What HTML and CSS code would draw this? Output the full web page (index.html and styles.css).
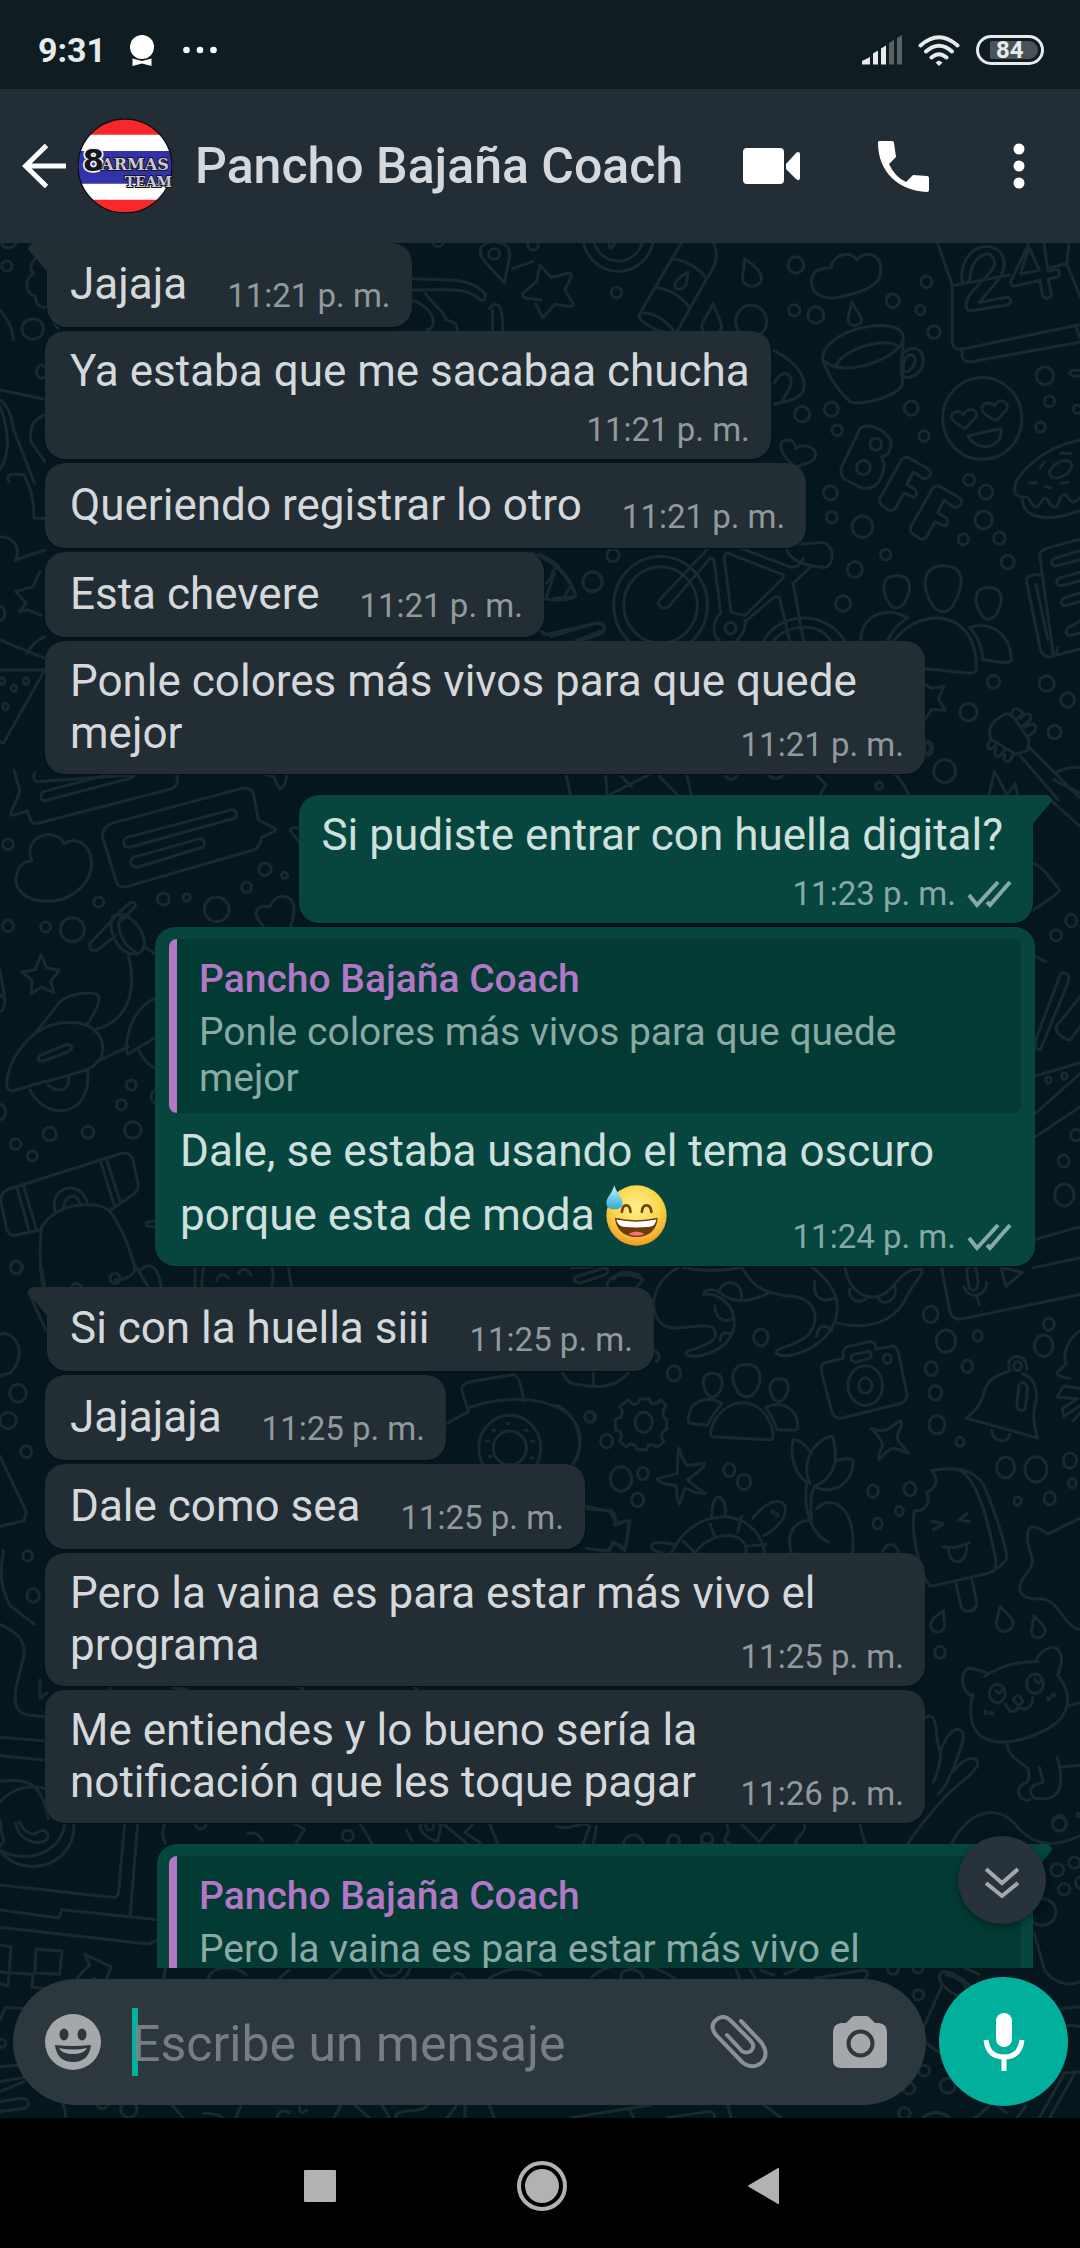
FILE: index.html
```html
<!DOCTYPE html>
<html lang="es">
<head>
<meta charset="utf-8">
<meta name="viewport" content="width=device-width, initial-scale=1">
<title>Pancho Bajaña Coach</title>
<link rel="stylesheet" href="styles.css">
</head>
<body>
<div class="app">
  <div class="status">
    <span class="clock">9:31</span>
    <svg class="notif" viewBox="0 0 24 31"><circle cx="12" cy="12" r="12" fill="#fff"/><path d="M2.500 23.500 12 26l9.500-2.500v7.500L12 28.500 2.500 31z" fill="#fff"/></svg>
    <svg class="more" viewBox="0 0 34 8" fill="#fff"><circle cx="3.500" cy="4" r="3.300"/><circle cx="17" cy="4" r="3.300"/><circle cx="30.500" cy="4" r="3.300"/></svg>
    <div class="system">
      <svg class="signal" viewBox="0 0 40 30"><g fill="#e8ebec"><path d="M0 29.500v-3.500l8-4v7.500zM11 18.500l5-3v14h-5zM19 13.500l5-3v19h-5z"/></g><g fill="#596165"><path d="M27 8l5-3v24.500h-5zM35 3l5-3v29.500h-5z"/></g></svg>
      <svg class="wifi" viewBox="0 0 42 31" fill="none" stroke="#e8ebec" stroke-width="4" stroke-linecap="round"><path d="M2.500 10.500Q21-6 39.500 10.500M8 16.500q13-11.500 26 0M13.500 22.500q7.500-6.500 15 0"/><path d="M21 25.500l3.500 2L21 31l-3.500-3.500z" fill="#e8ebec" stroke="none"/></svg>
      <span class="battery"><span class="level">84</span></span>
    </div>
  </div>

  <header class="bar">
    <button class="icon-btn" aria-label="Atrás"><svg width="44" height="44" viewBox="0 0 44 44" fill="none" stroke="#fff" stroke-width="5"><path d="M44 22H4M24.500 1.500 3.500 22l21 20.500"/></svg></button>
    <svg class="avatar" viewBox="51 53 288 288">
      <clipPath id="round"><circle cx="195" cy="197" r="142"/></clipPath>
      <g clip-path="url(#round)">
        <path fill="#fff" d="M50 50h290v290H50z"/>
        <path fill="#f8282a" d="M50 50h290v53H50zM50 298h290v45H50z"/>
        <path fill="#3232ab" d="M50 152h290v98H50z"/>
      </g>
      <circle cx="195" cy="197" r="141" fill="none" stroke="#0a0a0c" stroke-width="4"/>
      <g class="crest"><text x="68" y="213" class="crest-big">8</text><text x="124" y="210" class="crest-mid">ARMAS</text><text x="194" y="261" class="crest-low">TEAM</text></g>
    </svg>
    <h1>Pancho Bajaña Coach</h1>
    <button class="icon-btn" aria-label="Videollamada"><svg width="58" height="52" viewBox="0 0 58 52" fill="#fff"><rect y="8" width="41" height="36" rx="4"/><path d="M43 24 53 13q4-3 4 2v22q0 5-4 2L43 29z"/></svg></button>
    <button class="icon-btn" aria-label="Llamar"><svg width="58" height="52" viewBox="0 0 58 52" fill="#fff"><path d="M4 1h13q2 0 2 2l2 14-7 7q6 13 17 18l7-7 14 1q2 0 2 2v12q0 2-2 2C24 51 3 32 3 3q0-2 1-2z"/></svg></button>
    <button class="icon-btn" aria-label="Más opciones"><svg width="24" height="46" viewBox="0 0 24 46" fill="#fff"><circle cx="12" cy="6" r="5.500"/><circle cx="12" cy="23" r="5.500"/><circle cx="12" cy="40" r="5.500"/></svg></button>
  </header>

  <main class="chat">
    <svg class="doodles" viewBox="0 243 1080 1875" preserveAspectRatio="xMidYMin slice" aria-hidden="true">
      <!-- upper right: calendar, cup, letters, bicycle, people, brush -->
      <g transform="translate(540 240) scale(.3444 .3571)">
        <circle cx="227" cy="-15" r="103"/><circle cx="227" cy="-15" r="74"/><path d="M222 0q-20 40-22 10l5-15"/>
        <path d="M0 70l32 35 50-12q15 0 8 12l-18 35 24 38q2 10-14 8l-38-6L8 218l-20-40M-20 60l-60 20"/>
        <path d="M410 8 290 205q-5 10 2 16 40 40 103 40L484 108M500 0q30 50-16 108-40-48-96-54M342 134q60 10 92 56M296 204q50 0 92 50M430 90c-40 20-50 48-25 48 25-5 20-20 25-48z"/>
        <path d="M593 52c40 25 50 40 50 55 0 30-55 30-55 0 0-15 5-20 5-55zM503 178c-20 40-33 50-33 65 0 30 57 30 57 0 0-15-12-30-24-65z"/>
        <circle cx="743" cy="70" r="23"/><circle cx="222" cy="147" r="15"/><circle cx="738" cy="197" r="16"/><circle cx="801" cy="210" r="23"/><circle cx="613" cy="228" r="45"/>
        <path d="M845 78c5-40 60-50 75-22 30-30 70-15 70 28 0 50-60 62-120 76-50 8-80-8-82-42 0-25 15-40 57-40zM905 173c15 30 28 38 28 50 0 22-38 22-38 0 0-15 5-20 10-50z"/>
        <circle cx="1024" cy="170" r="19"/><circle cx="1122" cy="117" r="16"/><circle cx="1104" cy="196" r="13"/><circle cx="1144" cy="258" r="18"/>
        <path d="M1155 10l42 115v160q2 25 30 20l341-68M1197 128l165-30M1480 78l50-12 6-60M1530 68l38 90M1226 308v20q5 15 25 13l317-55M1555 240l13 35"/>
        <path d="M1225 110c-5-90 85-115 115-70 30 50-30 90-65 135l80-15c15 0 15 20 0 22l-105 17c-15 0-15-20-10-30 15-40 80-75 80-105-5-45-65-25-70 35-2 25-25 28-25 11zM1420 8l-54 110c0 10 5 12 15 10l70-15 8 40c5 15 25 13 25-2l-8-42 25-5c10-5 10-20 0-22l-26 5-12-80M1420 20l-25 75 55-10z"/>
        <path d="M820 335c0-90 235-130 235-60l-3 45v85c-15 35-140 65-155 45-40-40-60-70-77-115zM820 335c60 60 235-10 235-60M855 355c40-60 150-80 180-60M1055 315c50-35 75 20 45 55-15 15-40 20-50 8 0-30-5-50 5-63zM1055 360c0-60 50-40 30-10-10 20-30 25-30 10z"/>
        <path d="M680 310c80 40 100 90 80 120-20 20-40 20-80 30M680 400c30-50 60-20 45 15l-25 40"/>
        <circle cx="761" cy="488" r="22"/><circle cx="846" cy="474" r="20"/><circle cx="863" cy="533" r="15"/><circle cx="1078" cy="471" r="20"/><circle cx="1115" cy="549" r="15"/>
        <path d="M742 635c-40-25-60-75-25-75 20 0 25 15 25 25 10-15 60-10 58 15-2 25-30 25-58 35z"/>
        <circle cx="843" cy="708" r="20"/><circle cx="847" cy="776" r="16"/><circle cx="936" cy="803" r="30"/><circle cx="1004" cy="881" r="15"/><circle cx="914" cy="923" r="22"/><circle cx="880" cy="1018" r="22"/>
        <circle cx="1284" cy="500" r="115"/>
        <path d="M1235 528c-40-20-55-35-25-48 10 0 18 5 18 10 10-20 45-20 38 5zM1325 505c-40-15-55-35-30-48 15-3 20 2 25 8 10-25 45-15 35 10zM1243 548l95-20c10 55-70 70-95 20z"/>
        <path d="M930 527q20-15 60 5 40 25 25 55-5 20-25 20 15 20 5 45-15 50-60 43l-50-25q-15-12-10-33zM1050 615q10-10 20-5l55 30q15 10 5 22-8 10-20 5l-25-18-20 35 25 15q10 15-5 22l-28-12-25 42q-8 10-20 5l-22-15q-8-8-2-20zM1140 695q10-10 20-5l55 30q15 10 5 22-8 10-20 5l-27-18-18 35 25 15q10 15-5 22l-28-12-25 42q-8 10-20 5l-22-15q-8-8-2-20z"/>
        <circle cx="975" cy="572" r="17"/><circle cx="939" cy="637" r="20"/>
        <circle cx="1466" cy="380" r="25"/><circle cx="1479" cy="452" r="15"/><circle cx="1453" cy="524" r="14"/><circle cx="1560" cy="474" r="12"/><circle cx="1246" cy="672" r="16"/><circle cx="1295" cy="706" r="20"/><circle cx="1288" cy="784" r="25"/><circle cx="1334" cy="835" r="17"/><circle cx="1229" cy="838" r="15"/><circle cx="1358" cy="902" r="19"/>
        <path d="M1568 560c-110 20-190 100-190 135 0 20 15 25 25 25 20-5 20 20 35 28 15 0 20-28 30-25s10 25 30 25c15-15 5-30 25-35 15 0 10 25 30 20l15-10M1400 722c0 60 80 70 168 35M1512 597h28M1420 680h22M1466 690l18 5M1512 682l22-4M1452 638l12-16"/><ellipse cx="1512" cy="642" rx="35" ry="20" transform="rotate(-30 1512 642)"/><path d="M1568 365c-40-5-40 20 0 15"/>
        <circle cx="350" cy="1022" r="136"/><circle cx="350" cy="1022" r="107"/>
        <path d="M490 862 345 1010c-5 15 15 28 30 15l120-135 10 5 20 150c-20 15-30 60-5 75M545 877l160 60q5 10-5 15l-105 100-40-10-20-150q0-15 10-15M580 862l150 55 20-5 15-20M715 862c10 40 60 50 110 55 30 0 35-70-10-70l-70 5M790 912l-55 50 30 160M600 1065l80-65 15 0 30 122"/>
        <circle cx="553" cy="1087" r="16"/><path d="M595 1065c5 20-10 45-25 58M650 1120c50-80 180-85 235 3M680 1120c40-45 130-50 165 3"/>
        <circle cx="153" cy="957" r="28"/><circle cx="212" cy="883" r="18"/><path d="M0 880c50 20 90 70 104 115-10 15-60 15-90 10M48 910c-15 20-10 40-30 50M70 1000l15-25M0 1095l35 15 130-38c20-3 30 15 15 30l-80 25"/>
        <path d="M1034 940c50 0 45 40 25 75-10 15-30 20-40 10-30-40-30-85 15-85zM1170 912c70 0 60 60 30 110-15 25-45 25-60 0-35-50-30-110 30-110zM1300 973c50 0 45 40 25 75-10 15-30 20-40 5-30-40-25-80 15-80zM932 1120c0-60 60-100 136-62M1010 1120q20-40 58-62M1025 1125c80-105 245-90 242 75-5 18-20 12-35 12l-115-12M1248 1085c60-20 120 20 120 90-5 12-15 8-25 8l-58-8q0-50-37-90z"/>
        <path d="M1568 838l-95 25q-22 5-22 22l40 280 77-20M1455 937c-40 0-45 10-42 20l40 190c15 35 50 20 50-5M1440 965l35 155M1568 870l-75 22c-15 10-5 25 10 20l65-17M1568 930l-60 17c-15 10-5 25 10 20l50-13M1568 988l-47 15c-15 10-5 25 10 20l37-10M1568 1068l-35 18c-10 10-5 25 10 20l25-5"/>
        <circle cx="1317" cy="1237" r="18"/><circle cx="1471" cy="1242" r="22"/><circle cx="1532" cy="1288" r="20"/><circle cx="1244" cy="1322" r="25"/><circle cx="1494" cy="1378" r="19"/><circle cx="1175" cy="1487" r="32"/><circle cx="1112" cy="1422" r="22"/>
        <path d="M1117 1245l20 10 35-5-15 35 20 32-40-3-20 30M1350 1328q-60 30-40 70l70 42 35-10 5-30-35-50q-15-25-35-22zM1370 1325c5-25 30-5 32-2l-20 20M1395 1340c20-25 35-10 28 5l-20 15M1410 1365c20-20 35-5 28 10l-20 15M1310 1400c-20 20-5 30 5 22l12-15M1325 1422c-10 25 5 30 15 18l10-15M1350 1440c-10 25 15 25 20 10l5-15M1395 1445l110 123M1420 1420l145 140M1500 1490q30-15 68-12M1300 1568l20-80 35 65 25-30 10 45"/>
        <path d="M75 1495l15 65M190 1495l5 60M235 1500l30 30M320 1495l-120 60M345 1500l60 60M425 1495l15 60M800 1495l30 30-20 35M1030 1495q40 40 40 70"/><circle cx="985" cy="1528" r="10"/><circle cx="555" cy="1490" r="20"/><circle cx="685" cy="1480" r="28"/>
      </g>
      <!-- left edge: speech bubbles, cloud, scooter, camera -->
      <g transform="translate(0 770) scale(.3333)">
        <path d="M42 0l18 65-28 65q0 8 8 5l42-12 10 28q8 12 25 8l400-103q20-10 15-30l-8-26M105 8q-10 20 5 27l285-20q15-5 12-15M130 65l220-58M130 65q-15 15 0 28l260-68q15-5 15-20"/>
        <path d="M335 160l390-105q25-5 35 15l15 80 50 25q5 6-2 10l-38 17q-5 32-25 38l-380 110q-20 5-30-12l-42-135q-5-28 27-43zM380 203l315-84q20 2 12 25l-315 87c-25 5-25-23-12-28zM400 262l200-56q20 2 10 25l-195 60c-25 5-28-23-15-29z"/>
        <path d="M95 272c-30-75 75-105 98-50 40-30 90 10 80 75-10 55-70 100-140 97-60-3-95-40-83-80 5-25 20-40 45-42z"/>
        <circle cx="24" cy="223" r="16"/><circle cx="296" cy="396" r="15"/><circle cx="490" cy="387" r="18"/><circle cx="560" cy="382" r="11"/><circle cx="740" cy="352" r="15"/><circle cx="795" cy="298" r="19"/><circle cx="854" cy="316" r="9"/><circle cx="650" cy="418" r="37"/><circle cx="24" cy="468" r="17"/><circle cx="137" cy="471" r="15"/><circle cx="217" cy="479" r="36"/>
        <path d="M790 468c-35-35-25-65 20-58 15-45 75-40 72 10 0 20-5 35-10 48M790 10l30 10 20 38q20-10 20-48M900 220l-30-40q0-10 30-5"/>
        <path d="M123 555l17 38 38 8-26 32 10 35-38-17-30 20 2-40-30-25 40-7z"/>
        <path d="M270 520l105-110c20-20 35-15 30 0l-40 42M270 520c-5 20 10 25 25 18l50-40M345 435c50-10 90 50 88 90-5 40-60 35-85-10-20-35-20-70-3-80zM365 440c-20 15-5 80 40 105M435 530l30 22M385 555c30 120-10 200-95 222M290 875l95-45M105 790l75-95c30-25 90-30 110-22 15 10 5 40-30 92M20 945c0-70 70-190 190-187 90-5 130 85 70 130-20 20-170 50-240 75-15 0-20-8-20-18zM125 855l75-32c18 0 20 15 5 22l-75 28c-20 2-20-12-5-18zM90 960c50 100 190 80 172-62M145 945c20 25 70 20 60-25M465 685c-70 30-95 130-82 168l82-50M415 840q20 40 50 55M0 600l15 90q0 30-15 35M0 675q15 10 15 15"/>
        <circle cx="394" cy="945" r="15"/><circle cx="364" cy="1004" r="15"/><circle cx="399" cy="1080" r="25"/><circle cx="264" cy="1087" r="18"/><circle cx="149" cy="1092" r="20"/><circle cx="47" cy="1122" r="16"/><circle cx="97" cy="1158" r="15"/><circle cx="475" cy="980" r="22"/><circle cx="-8" cy="1026" r="25"/><circle cx="50" cy="1493" r="18"/>
        <path d="M120 1380l-70 15q-22 5-30-18L3 1298q-3-30 22-40l340-108q22-5 33 15l16 75q3 20-12 32l-70 48M50 1250l38 135M70 1245l40 135M302 1175l42 135M320 1170l42 130M165 1325c-20-80 85-100 98-18M190 1320c0-50 48-55 50-12M130 1560c-10-60-12-130-5-190 60-85 180-75 205-45 30 40 55 90 75 170 0 20-30 35-60 35M405 1485l45 75M420 1500c40-30 55 0 65 55M210 1560q15-35 35-8"/><circle cx="345" cy="1525" r="15"/>
        <path d="M585 1490v60M610 1490l-5 60M650 1530q15-30 35-5M715 1510q20-25 38 5M815 1490q10 40 0 60M865 1490l10 65M465 1355q-40-2-20 15h20"/>
      </g>
      <!-- lower right: octopus, people, camera, bell, flower, turtle, ice cream, cat -->
      <g transform="translate(560 1260) scale(.3333 .3827)">
        <path d="M355 20c-90 40-90 130-40 152 50 20 150-25 152 22 0 30-90 40-90 50 10 20 145 0 146-80 0-50-50-75-80-75-30 10-5-25 35-5 50 40 120 15 155 0M370 20q80 15 170 0M545 15c30 60 80 75 150 80 70 5 90 60 50 100-30 30-110 35-95 50 30 20 180-20 182-120 0-50-40-80-80-110M830 165c100 20 170-5 205-60 20-40 60-70 50-80-70-10-80 70-145 72-50 0-80-40-85-80M475 85c15-40 75-35 70 20M465 120c0 40 40 45 55 30M480 210q5-30 35-15M765 55c-10 50 30 55 55 45M770 200q10-45 45-15M870 75c-10 30 35 45 55 20M955 100c20 25 60 0 50-30"/>
        <path d="M35 20l60-2M45 45l90-25c15 5 10 15-5 20l-70 20c-15 0-20-8-15-15zM140 70q10-50 110-20l-20 20M160 50q20-30 80-10M280 235q30 15 10 30M5 290q20 40 50 35 100 20 150-30M100 290v40"/>
        <circle cx="603" cy="202" r="22"/><circle cx="342" cy="296" r="20"/><circle cx="89" cy="410" r="14"/><circle cx="140" cy="473" r="18"/><circle cx="183" cy="572" r="32"/><circle cx="249" cy="558" r="16"/><circle cx="233" cy="627" r="18"/><circle cx="508" cy="549" r="17"/><circle cx="552" cy="580" r="20"/><circle cx="251" cy="424" r="26"/>
        <path d="M205 365q15 20 30 8l5-10h28l5 10q15 8 30-8l15 15q-15 20-5 32l7 5v24l-12 8q-8 15 5 25l-20 15q-20-10-28-5l-5 12h-28l-8-12q-15-8-25 5l-20-15q10-15 2-25l-15-5v-28l15-5q12-15-2-28z"/>
        <path d="M457 296c40 0 35 40 10 60q-15 5-25-5c-20-30-15-55 15-55zM558 273c55 0 50 50 20 80q-20 12-42-5c-30-40-20-75 22-75zM656 310c40 0 35 35 10 58q-15 5-25-5c-20-30-10-53 15-53zM388 400c10-35 60-45 98-25q-25 25-45 57l-50-5q-10-5-3-27zM453 445c30-95 165-100 187 10q0 15-10 15l-170-8q-12-2-7-17zM617 385c50-20 100 5 96 55q-5 5-12 5l-50-2q-10-30-34-58z"/>
        <path d="M790 270l60-13q-5-25 10-30l70-14q20 0 16 20l50-8q15 0 20 20l25 105q0 20-20 25l-175 38q-20 3-30-15l-30-100q-5-20 4-28zM880 247l45-8q15 5 5 18l-45 10c-15-3-15-15-5-20z"/><circle cx="916" cy="328" r="52"/><circle cx="916" cy="328" r="20"/><circle cx="982" cy="258" r="12"/>
        <path d="M933 440q35 10 50 2l38-22q5 2 3 15-20 30-5 42l28 28q-30-10-50-13-15 5-40 30-5-10 12-38-10-25-36-44zM357 492q12 35 25 45l50-5q10 5-50 43l52 35q-30 0-60-15l-15 43q-8 0-10-48-50-5-57-18l60-15q0-45 5-65z"/>
        <path d="M750 585c-50-20-60-80-50-115 20 0 40 15 52 35 10-20 35-40 65-45 10 20 10 40 10 65 30-8 45-8 53 0 0 50-50 90-110 70M750 585c-20-40-5-65 2-80M765 590c30-10 55-30 62-70M740 585c-10 60 10 130 65 152M765 590c-20 30-10 70-10 90M770 650c40-40 120-10 108 115M695 765c-20-50 10-85 60-85"/>
        <path d="M335 765c60-120 250-130 280 0M405 765c50-60 160-60 153 0M450 690l15 33M545 670l-12 40M563 748l55-5M370 735l35 30M455 675c0-30 5-60 25-55 15 10 20 30 15 48M578 675c50-55 90-50 98-30 5 30-30 60-65 75M350 745c-90-20-95 10-45 20M80 650l75 5q15 10 10 38l43-12-12 73-38-18-10 25-70-8"/><circle cx="638" cy="658" r="3"/><circle cx="652" cy="666" r="3"/>
        <circle cx="939" cy="604" r="16"/><circle cx="1050" cy="598" r="18"/><circle cx="1018" cy="656" r="12"/><circle cx="953" cy="689" r="14"/><circle cx="992" cy="768" r="24"/>
        <path d="M1115 550c20 20 20 45-15 58 15 25-5 50-37 47-10 50 10 140 40 190 5 5 15 8 25 5l160-32q50-25 53-40c-10-60-50-150-70-190-30-40-80-50-156-38zM1190 545c60 20 90 120 118 240q0 20-10 30M1115 682l35 8-30 15M1222 662l-25 17 32 5M1150 750q45 5 78-12M1165 752c0 50 60 50 55-10M1188 845l15 60c10 20 45 15 48-8l-15-60"/>
        <path d="M1150 915c-30 20-40 30-38 40 0 20 40 25 42 0zM1320 905c30 25 40 35 40 45-5 25-45 30-52 0zM1422 930c25 20 35 35 35 40-5 20-40 25-43 0z"/>
        <path d="M1145 20l25 115q5 20 30 20l360-65M1220 30c0-20 25-20 30 0l5 30c-5 25-28 25-30 0zM1212 70c15 35 70 25 68-12M1250 95l8 22M1323 20l65 12-50 37zM1420 20l140-25"/>
        <circle cx="1112" cy="142" r="22"/><circle cx="1158" cy="212" r="29"/><circle cx="1253" cy="198" r="14"/><circle cx="1222" cy="278" r="16"/><circle cx="1114" cy="284" r="18"/><circle cx="1126" cy="347" r="19"/><circle cx="1131" cy="430" r="24"/><circle cx="1200" cy="475" r="12"/><circle cx="1467" cy="168" r="16"/><circle cx="1451" cy="224" r="28"/><circle cx="1337" cy="542" r="27"/><circle cx="1428" cy="547" r="33"/><circle cx="1530" cy="524" r="20"/><circle cx="1469" cy="623" r="17"/><circle cx="1373" cy="630" r="11"/><circle cx="1537" cy="583" r="12"/><circle cx="1140" cy="1025" r="16"/>
        <path d="M1350 290c-60 15-70 30-82 68q-10 30-50 55l215 52q-20-55-5-95c5-40-10-65-40-72M1350 290c-20-50 55-50 50-5M1375 330c10-20 30-5 27 10-5 30 0 60-22 52-20-8 0-40-5-62zM1295 445c5 35 50 35 55 10"/><circle cx="1373" cy="277" r="12"/>
        <path d="M1560 185c-50 30-50 80-40 85l-30 25q5 10 40 15M1560 335l-50-5-18 28 60 5-45 25 5 20 45-25M1560 400l-20 20M1560 675l-95 40c-20-5-60-40-62 5-5 40 30 60 5 90-60 60-15 80 40 75 50 5 70 80 112 80"/>
        <path d="M1240 1140c-45-10-40-85 0-72l40 10M1275 1088c40-25 90-40 160-38M1425 1050c20-40 80-60 80 0l-12 35c50 50 35 110-30 140-130 60-260 50-225-90M1340 1265c10 40 50 50 65 65 5 15 0 30-5 35-40 10-25 55 10 45M1438 1325l12 40c-40 5-45 20-30 40 50 10 75-5 80-30 5-20 0-50-8-75M1500 1325l60-5M1525 1165l35-8M1360 1148q15-20 25 0 10 10-12 15zM1337 1160c15 35 40 15 38 5 10 15 45 10 43-22M1308 1125q8 15 22-5M1425 1095q10 20 20 0"/><circle cx="1312" cy="1133" r="24"/><circle cx="1425" cy="1107" r="25"/><circle cx="1277" cy="1182" r="3"/><circle cx="1295" cy="1184" r="3"/><circle cx="1466" cy="1146" r="3"/><circle cx="1480" cy="1137" r="3"/>
        <path d="M1098 1195c40-20 25 60 42 90 20-40 40-70 65-55 15 20-10 60-30 110 30-30 60-50 78-30 10 20-60 60-100 95-40 40-80 80-110 120M1142 1285q0 40-22 80M1170 1345q-10 30-35 50M1175 1525c60-100 150-100 200-40 60 55 120 45 185 20"/><circle cx="1498" cy="1472" r="21"/><circle cx="1556" cy="1450" r="4"/>
        <path d="M-10 1480c40 15 80-20 100 0l-20 45M110 1480l-10 45M500 1475c20 30-30 40 10 50M540 1470l58 50 50-50M730 1470c20 30-40 45-20 55M900 1475l15 50M190 1525c10-30 50-30 60 0"/><circle cx="341" cy="1520" r="18"/><circle cx="441" cy="1515" r="17"/><path d="M-10 380c60 20 90 100 50 150"/>
      </g>
      <!-- round the message box -->
      <g transform="translate(0 1820) scale(.3444 .3333)">
        <circle cx="95" cy="20" r="120"/><path d="M0 80l12-18q-12-30-10-60M45 10c10 50 60 70 90 50 15-20-10-40-30-20-20 10-40-15-50-35M0 90c80 50 190 0 188-90"/>
        <path d="M362 10l-18 210q-5 15-20 12L0 195M400 10l-22 275M0 270l170 24 10-25 280 30M0 322l430 50 30-12M105 388l75 5-7 70-72-5zM0 375l32 5-5 80-27-5M0 490l22 8 5-40 70 5-5 38 40 5M245 403l78 37-22 60-25-25-55 20q-5-20 40-60zM0 600l15-38 70 5M0 740l60-5M0 785l85-15M0 815l70-30M0 845l60-10c30 0 25 25 10 30l-70 10M180 850q15 20 8 45"/><circle cx="5" cy="670" r="12"/>
        <path d="M480 5q-15 35 0 65M720 40q30-5 42 22M850 8l35 20-25 40M1045 10l35 60M1180 30l15 30M1220 20c-5-20 60-20 60 0l-10 45q-50-20-50-45zM1285 10l70 60M1420 8l25 62M1375 10l-25 28 45 30"/><circle cx="1010" cy="47" r="16"/><circle cx="1248" cy="18" r="12"/><circle cx="583" cy="12" r="15"/>
        <path d="M480 445l-5 30M605 475c10-40 80-40 110-10M990 445l-35 32M840 450l-30 25M1310 475q20-30 40 0M1420 475q80-50 150-10"/><circle cx="1132" cy="430" r="60"/><circle cx="1132" cy="430" r="38"/>
        <circle cx="374" cy="868" r="24"/><circle cx="297" cy="850" r="16"/><path d="M500 855l32 40M590 880q40 0 60 15M700 855l-15 38M805 893q5-30 35-15M870 860q0 30 20 10M990 855l-20 38M1030 855l40 38M1110 855l20 38M1150 893c-10-30 70-10 90-35M1300 893l25-35M1350 855v38M1420 855l15 38"/>
      </g>
      <g transform="translate(540 1820) scale(.3444 .3333)">
        <circle cx="388" cy="62" r="16"/><circle cx="485" cy="56" r="16"/><circle cx="1502" cy="150" r="19"/><circle cx="1522" cy="208" r="17"/><circle cx="1552" cy="128" r="17"/><circle cx="1508" cy="12" r="20"/><circle cx="1458" cy="276" r="40"/><circle cx="1573" cy="188" r="18"/><circle cx="1099" cy="524" r="15"/><circle cx="1115" cy="752" r="16"/><circle cx="1184" cy="797" r="22"/><circle cx="1071" cy="805" r="17"/><circle cx="1058" cy="880" r="17"/><circle cx="1025" cy="448" r="15"/><circle cx="1097" cy="445" r="14"/>
        <path d="M1435 340l30 110c25 40 75 50 103 35M1160 470c0-40 90 10 100 50-20 30-100-10-100-50zM1180 465q50 10 60 45M1235 445l40 18M1168 495l-60 140q0 40 70 70M1568 560l-50 5M1568 620q-40-10-60 10M1520 765l-70 128M1550 765l-70 128M1568 755l-50 5M1265 893l50-45 40 30M1385 893l25-35M1110 893q40-30 80 0"/>
        <path d="M150 470c70-60 180-40 240 5M235 475c-5-35 60-35 65 0M570 450l10 25M610 450l15 25M640 450l38 15M710 462l40-15M800 475l140-25q20 5 5 25M90 893l230-38M260 870l12 23M545 855l10 38M650 855l50 38M370 893l120-18q20 0 15 18"/>
      </g>
      <!-- upper left edge and gaps between messages -->
      <g transform="scale(.3444 .3333)">
        <circle cx="25" cy="722" r="22"/><circle cx="20" cy="798" r="15"/><circle cx="95" cy="987" r="31"/><path d="M110 770c-25 20-25 40-12 50-30 20-25 60 5 70 0 30 20 35 35 30M0 930q40 50 38 90M155 965q10 20 15 20"/>
        <path d="M1190 835c90 10 180-10 220 50 0 15-5 20-15 15-40-40-100-30-200-30M1235 880c20 30 60 60 60 80 40 10 30 20 35 40M1190 900c60 10 90 80 50 90M1420 925c30-30 40 0 40 65M1430 930v60M1465 850c-30-40-75-70-70-100 10-40 85-30 85 10 0 25-10 50-15 90z"/><circle cx="1435" cy="762" r="16"/><circle cx="1272" cy="725" r="15"/><circle cx="1548" cy="735" r="15"/><path d="M1568 795l-10 50-40 35q-5 10 10 15l42 5"/>
      </g>
      <g transform="translate(0 300) scale(.6889 .3333)">
        <ellipse cx="60" cy="215" rx="7" ry="20"/><ellipse cx="0" cy="940" rx="7" ry="22"/><ellipse cx="3" cy="1143" rx="4" ry="10"/><ellipse cx="20" cy="1165" rx="4" ry="10"/><ellipse cx="38" cy="1143" rx="4" ry="10"/><ellipse cx="8" cy="1220" rx="4" ry="10"/><ellipse cx="1348" cy="1345" rx="6" ry="20"/>
        <path d="M0 270l65 28M0 320c15 80 15 160-5 200M0 300q15 20 20 90l30 160M65 345q-25 20-20 80l20 60M35 525q-30-10-22 20M35 525c10 40 15 80 14 130h16M0 710c25 0 30 50 22 70l43-30M58 815l-10 45-25 15 15 35-10 25 12-5 20 15M0 1020l65 55M65 1010q-20 20-25 50M0 1110l65 0-60 220-5-5"/>
        <path d="M770 760c40 20 60 90 65 130l-30 5M805 820l-12 70M790 1005l75-35q15 0 12 20l-40 32"/><ellipse cx="860" cy="845" rx="14" ry="28"/>
      </g>
      <!-- right edge beside the replies -->
      <g transform="translate(0 780) scale(.6889 .3333)">
        <path d="M1530 0l38 40M1525 60l43 80M1500 250c15 10 30 60 38 80q0 10-38 60M1540 580q15-5 10 30l-40 200q-10 0-5-40zM1568 650l-35 90q0 30 20 40l15-40M1503 888l65-40M1503 1000l65-120M1503 1070l65-90M1500 1380l68-40M1503 530l15 15"/>
        <ellipse cx="1555" cy="422" rx="8" ry="19"/><ellipse cx="1533" cy="466" rx="8" ry="17"/><ellipse cx="1522" cy="900" rx="4" ry="10"/><ellipse cx="1545" cy="888" rx="4" ry="10"/><ellipse cx="1562" cy="1065" rx="8" ry="17"/><ellipse cx="1544" cy="1143" rx="8" ry="18"/><ellipse cx="1545" cy="1245" rx="14" ry="33"/>
      </g>
      <!-- left edge and phone beside the lower messages -->
      <g transform="translate(0 1260) scale(.6889 .3699)">
        <ellipse cx="23" cy="20" rx="8" ry="17"/><ellipse cx="26" cy="360" rx="12" ry="24"/><ellipse cx="12" cy="434" rx="12" ry="22"/><ellipse cx="38" cy="518" rx="8" ry="16"/><ellipse cx="40" cy="800" rx="7" ry="14"/><ellipse cx="48" cy="907" rx="9" ry="18"/>
        <path d="M60 20l5 50M42 90l25 100M0 200c25-10 40 60 15 105l-15 8M0 530l38 150-3 25-35 15M5 785c-5 60-5 100 10 150l35 50M0 985c20 20 35 30 35 80-5 60-30 150 5 165l25 5M58 1135v50l10-15M0 1290l65 10M0 1340l65 12M70 1510c-10-100-30-110-75-100"/>
        <path d="M670 350q0-20 25-25l50-15q10 0 15 70M670 350l10 60-30 30M680 400c70-50 165-20 162 90 0 30-5 50-10 60M850 665l35 15 10 30 20-5-8 80-15-20-10 20"/><ellipse cx="740" cy="508" rx="45" ry="88"/><ellipse cx="740" cy="508" rx="24" ry="46"/><ellipse cx="857" cy="424" rx="8" ry="13"/>
        <path d="M736 442h3M715 460h3M762 460h3M707 490h3M772 490h3M710 530h3M771 535h3"/>
        <path d="M160 1152v10M250 1155q15 5 20 5M420 1152q10-5 20 8M600 1152l5 8"/>
      </g>
    </svg>

    <section class="viewport" aria-label="Mensajes">
      <ol class="messages">
        <li class="bubble inline tail"><p>Jajaja</p><time>11:21 p. m.</time></li>
        <li class="bubble stacked"><p>Ya estaba que me sacabaa chucha</p><time>11:21 p. m.</time></li>
        <li class="bubble inline"><p>Queriendo registrar lo otro</p><time>11:21 p. m.</time></li>
        <li class="bubble inline"><p>Esta chevere</p><time>11:21 p. m.</time></li>
        <li class="bubble wrapped">Ponle colores más vivos para que quede mejor<time>11:21 p. m.</time></li>
        <li class="bubble stacked out tail turn"><p>Si pudiste entrar con huella digital?</p><time>11:23 p. m.<svg class="ticks" viewBox="0 0 45 28"><path d="M2 15l8 10L31 2M20 22l3 3L43 2"/></svg></time></li>
        <li class="bubble out reply">
          <blockquote><cite>Pancho Bajaña Coach</cite>Ponle colores más vivos para que quede mejor</blockquote>
          <div class="wrapped">Dale, se estaba usando el tema oscuro porque esta de moda <svg class="emoji" viewBox="142 100 182 184" role="img" aria-label="sonrisa con sudor">
              <defs><radialGradient id="face" cx=".5" cy=".35" r=".65"><stop offset="0" stop-color="#fdf08a"/><stop offset=".6" stop-color="#fbd64a"/><stop offset="1" stop-color="#f19a24"/></radialGradient><linearGradient id="drop" x2="0" y2="1"><stop offset="0" stop-color="#c8f4ff"/><stop offset="1" stop-color="#2fa8d8"/></linearGradient></defs>
              <circle cx="233" cy="192" r="91" fill="url(#face)"/>
              <path d="M168 199q65 14 129 0c-2 35-25 58-64 58s-62-23-65-58z" fill="#6e3a0c"/><path d="M172 204q61 13 121 0-3 20-20 22-40 4-80 0-17-3-21-22z" fill="#fff"/><path d="M208 248q25-16 50 0-24 10-50 0z" fill="#f5757e"/>
              <path d="M189 181c2-26 24-26 26 0M249 181c2-26 26-26 29 0" fill="none" stroke="#71400f" stroke-width="8" stroke-linecap="round"/>
              <path d="M166 101c5 20 25 38 25 53 0 26-49 26-49 0 0-15 20-33 24-53z" fill="url(#drop)"/>
            </svg><time>11:24 p. m.<svg class="ticks" viewBox="0 0 45 28"><path d="M2 15l8 10L31 2M20 22l3 3L43 2"/></svg></time></div>
        </li>
        <li class="bubble inline tail turn"><p>Si con la huella siii</p><time>11:25 p. m.</time></li>
        <li class="bubble inline"><p>Jajajaja</p><time>11:25 p. m.</time></li>
        <li class="bubble inline"><p>Dale como sea</p><time>11:25 p. m.</time></li>
        <li class="bubble wrapped">Pero la vaina es para estar más vivo el programa<time>11:25 p. m.</time></li>
        <li class="bubble wrapped">Me entiendes y lo bueno sería la notificación que les toque pagar<time>11:26 p. m.</time></li>
        <li class="bubble out reply tail turn">
          <blockquote><cite>Pancho Bajaña Coach</cite>Pero la vaina es para estar más vivo el</blockquote>
        </li>
      </ol>
      <button class="to-end" aria-label="Ir al final"><svg width="34" height="32" viewBox="0 0 34 32" fill="none" stroke="#a3a8ab" stroke-width="4"><path d="M1 2l16 14L33 2M1 16l16 13 16-13"/></svg></button>
    </section>

    <form class="composer">
      <div class="field">
        <button type="button" class="icon-btn" aria-label="Emoji"><svg width="56" height="56" viewBox="0 0 56 56"><circle cx="28" cy="28" r="28" fill="#a4a8ab"/><g fill="#2d373e"><ellipse cx="19" cy="20.500" rx="4.500" ry="6"/><ellipse cx="37" cy="20.500" rx="4.500" ry="6"/><path d="M10 31q18 2 36 0-2 17-18 17T10 31z"/></g><path d="M14 34q14 3 28 0-3 6-14 6t-14-6z" fill="#a4a8ab"/></svg></button>
        <div class="entry"><span class="caret"></span><input type="text" aria-label="Escribe un mensaje" placeholder="Escribe un mensaje"></div>
        <button type="button" class="icon-btn clip" aria-label="Adjuntar"><svg width="58" height="54" viewBox="0 0 58 54" fill="none" stroke="#8a9094" stroke-width="4" stroke-linecap="round"><path d="M31 6l20 21q9 13 0 21-9 7-19-1L6 20Q-1 11 6 5q7-6 14 0l20 20q6 6 1 11-5 3-9 0L17 20"/></svg></button>
        <button type="button" class="icon-btn" aria-label="Cámara"><svg width="56" height="54" viewBox="0 0 56 54"><path d="M9 8h5l6-6q1-1 3-1h11q2 0 3 1l6 6h4q8 1 8 9v28q0 8-8 8H9q-8 0-8-8V17q0-8 8-9z" fill="#a4a8ab"/><circle cx="28.500" cy="28.500" r="12" fill="#a4a8ab" stroke="#2d373e" stroke-width="4"/></svg></button>
      </div>
      <button type="button" class="mic" aria-label="Grabar nota de voz"><svg width="42" height="58" viewBox="0 0 42 58"><rect x="13" width="16" height="34" rx="8" fill="#fff"/><path d="M3 27q2 17 18 17t18-17M21 43v15" fill="none" stroke="#fff" stroke-width="5"/></svg></button>
    </form>
  </main>

  <nav class="system-nav">
    <button class="icon-btn" aria-label="Recientes"><svg width="50" height="50" viewBox="0 0 50 50"><rect x="9" y="9" width="32" height="32" rx="1" fill="#b2b2b2"/></svg></button>
    <button class="icon-btn" aria-label="Inicio"><svg width="50" height="50" viewBox="0 0 50 50"><circle cx="25" cy="25" r="23" fill="none" stroke="#b2b2b2" stroke-width="4"/><circle cx="25" cy="25" r="17" fill="#b2b2b2"/></svg></button>
    <button class="icon-btn" aria-label="Volver"><svg width="50" height="50" viewBox="0 0 50 50"><path d="M39 7q1-1 1 1v34q0 2-1 1L10 26q-2-1 0-2z" fill="#b2b2b2"/></svg></button>
  </nav>
</div>
</body>
</html>
```
FILE: styles.css
```css
* {
  box-sizing: border-box;
}

body {
  margin: 0;
  font-family: Roboto, "Noto Sans", sans-serif;
  background: #000;
  color: #d5d9db;
}

h1,
p,
ol,
blockquote {
  margin: 0;
  padding: 0;
}

svg {
  display: block;
  flex: none;
}

button {
  padding: 0;
  border: 0;
  background: none;
}

.icon-btn {
  display: flex;
  align-items: center;
  justify-content: center;
  flex: none;
}

.app {
  display: flex;
  flex-direction: column;
  height: 100vh;
}

/* status bar */

.status {
  display: flex;
  align-items: center;
  height: 89px;
  padding: 11px 36px 0 38px;
  background: #0f1c22;
  flex: none;
}

.clock {
  font-size: 34px;
  font-weight: 700;
  line-height: 40px;
  color: #e8ebec;
}

.notif {
  width: 24px;
  height: 31px;
  margin-left: 24px;
}

.more {
  width: 34px;
  height: 8px;
  margin-left: 29px;
}

.system {
  display: flex;
  align-items: center;
  gap: 16px;
  margin-left: auto;
}

.signal {
  width: 40px;
  height: 30px;
}

.wifi {
  width: 42px;
  height: 31px;
}

.battery {
  width: 68px;
  height: 30px;
  padding: 3px 3px 3px 11px;
  border: 3px solid #e8ebec;
  border-radius: 15px;
}

.level {
  display: block;
  width: 48px;
  height: 18px;
  padding-left: 6px;
  border-radius: 2px 9px 9px 2px;
  background: #495459;
  color: #e8ebec;
  font-size: 24px;
  font-weight: 700;
  line-height: 19px;
}

/* conversation header */

.bar {
  display: flex;
  align-items: center;
  height: 154px;
  padding: 0 49px 0 22px;
  background: #232d36;
  flex: none;
}

.avatar {
  width: 96px;
  height: 96px;
  margin-left: 11px;
}

.crest {
  font-family: "DejaVu Serif", serif;
  font-weight: 700;
  fill: #c9c9cf;
  stroke: #15151c;
  stroke-width: 6px;
  paint-order: stroke;
}

.crest-big {
  font-family: "DejaVu Sans", sans-serif;
  font-size: 92px;
  fill: #15151c;
  stroke: #f2f2f2;
  stroke-width: 10px;
}

.crest-mid {
  font-size: 48px;
}

.crest-low {
  font-size: 42px;
}

h1 {
  flex: 1;
  padding-left: 22px;
  font-size: 50px;
  font-weight: 500;
  line-height: 60px;
  white-space: nowrap;
}

.bar h1 ~ .icon-btn + .icon-btn {
  margin-left: 74px;
}

/* chat */

.chat {
  position: relative;
  display: flex;
  flex-direction: column;
  flex: 1;
  min-height: 0;
  background: #05161e;
}

.doodles {
  position: absolute;
  inset: 0;
  width: 100%;
  height: 100%;
  fill: none;
  stroke: #192a2f;
  stroke-width: 3px;
  stroke-linejoin: round;
  stroke-linecap: round;
}

.doodles * {
  vector-effect: non-scaling-stroke;
}

.viewport {
  position: relative;
  flex: 1;
  min-height: 0;
}

.messages {
  display: flex;
  flex-direction: column;
  align-items: flex-start;
  gap: 4px;
  height: 100%;
  padding: 0 45px;
  overflow: hidden;
  list-style: none;
}

.bubble {
  position: relative;
  flex: none;
  max-width: 880px;
  padding: 14px 21px 10px 25px;
  border-radius: 20px;
  background: #222d34;
  box-shadow: 0 1px 1px #03101a;
  font-size: 44px;
  line-height: 52px;
}

.bubble p {
  padding-bottom: 5px;
}

time {
  display: flex;
  align-items: center;
  align-self: flex-end;
  gap: 11px;
  color: #92999d;
  font-size: 33px;
  line-height: 39px;
  white-space: nowrap;
}

/* short text: the time sits beside it */
.inline {
  display: flex;
  gap: 40px;
  padding-top: 16px;
  padding-bottom: 12px;
}

/* one full line: the time sits below it */
.stacked {
  display: flex;
  flex-direction: column;
  gap: 8px;
}

/* several lines: the time shares the last one */
.wrapped {
  display: flow-root;
}

.wrapped time {
  float: right;
  margin-top: 18px;
}

.reply .wrapped time {
  margin-top: 40px;
}

.out {
  align-self: flex-end;
  background: #06463f;
  color: #cfe0dd;
}

.out time {
  color: #86aaa5;
}

.out.stacked {
  padding-right: 21px;
  padding-left: 22px;
}

.out.stacked p {
  padding-right: 9px;
}

.turn {
  margin-top: 17px;
}

.tail {
  margin-left: 2px;
  padding-left: 23px;
  border-top-left-radius: 0;
}

.tail.inline {
  padding-top: 15px;
}

.tail::before {
  content: "";
  position: absolute;
  top: 0;
  left: -19px;
  width: 20px;
  height: 30px;
  border-top-left-radius: 6px;
  background: inherit;
  clip-path: polygon(0 0, 100% 0, 100% 100%, 0 6px);
}

.out.tail {
  margin-left: 0;
  margin-right: 2px;
  border-radius: 20px 0 20px 20px;
}

.out.tail::before {
  left: auto;
  right: -19px;
  border-radius: 0 6px 0 0;
  clip-path: polygon(0 0, 100% 0, 100% 6px, 0 100%);
}

.reply,
.out.reply {
  width: 880px;
  padding: 12px 14px 10px;
}

.out.reply.tail {
  width: 876px;
  padding-left: 12px;
  padding-right: 12px;
}

.reply .wrapped {
  padding: 12px 9px 0 11px;
}

blockquote {
  padding: 17px 20px 12px 22px;
  border-left: 8px solid #b278c6;
  border-radius: 8px;
  background: #033b34;
  color: #8aaaa5;
  font-size: 39px;
  line-height: 46px;
}

cite {
  display: block;
  margin-bottom: 7px;
  color: #b278c6;
  font-style: normal;
  font-weight: 500;
}

.emoji {
  display: inline-block;
  width: 61px;
  height: 61px;
  margin: 8px 0 7px;
  vertical-align: -23px;
}

.ticks {
  width: 45px;
  height: 28px;
  fill: none;
  stroke: currentColor;
  stroke-width: 4px;
}

.to-end {
  position: absolute;
  right: 34px;
  bottom: 44px;
  display: grid;
  place-items: center;
  width: 88px;
  height: 88px;
  padding-top: 6px;
  border-radius: 50%;
  background: #28323a;
  box-shadow: 0 3px 8px rgba(0, 0, 0, 0.4);
}

/* message box */

.composer {
  position: relative;
  display: flex;
  align-items: center;
  gap: 13px;
  padding: 9px 12px 12px 13px;
}

.field {
  display: flex;
  align-items: center;
  flex: 1;
  height: 126px;
  padding: 0 38px 0 32px;
  border-radius: 63px;
  background: #2d373e;
}

.entry {
  position: relative;
  flex: 1;
  margin-left: 31px;
}

.caret {
  position: absolute;
  top: 0;
  left: 0;
  width: 6px;
  height: 68px;
  background: #00af9c;
}

input {
  position: relative;
  display: block;
  width: 100%;
  height: 68px;
  padding: 4px 0 0;
  border: 0;
  outline: 0;
  background: none;
  color: #d5d9db;
  font: 50px/64px Roboto, "Noto Sans", sans-serif;
}

input::placeholder {
  color: #7f868a;
  opacity: 0.9;
}

.clip {
  margin-right: 64px;
}

.mic {
  display: grid;
  place-items: center;
  width: 129px;
  height: 129px;
  border-radius: 50%;
  background: #00af9c;
  flex: none;
}

/* system navigation */

.system-nav {
  display: flex;
  align-items: center;
  justify-content: center;
  height: 130px;
  padding: 6px 0 0 4px;
  background: #000;
  flex: none;
}

.system-nav .icon-btn {
  width: 222px;
}
```
